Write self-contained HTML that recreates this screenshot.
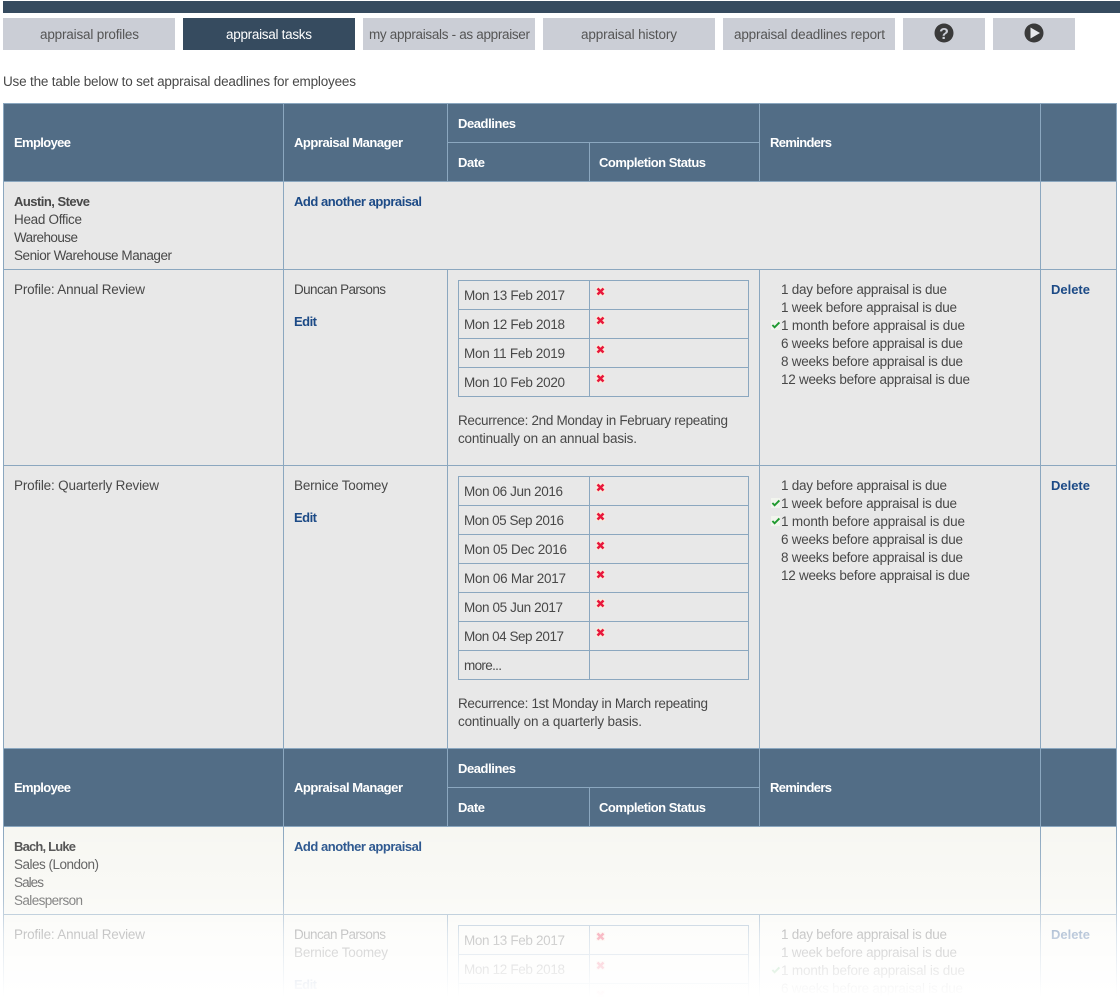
<!DOCTYPE html>
<html><head><meta charset="utf-8"><title>Appraisal tasks</title>
<style>
html,body{margin:0;padding:0;background:#fff}
svg{display:block}
text{font-family:"Liberation Sans",sans-serif;font-size:13.5px;fill:#484848}
.t{fill:#555;font-size:13.5px}
.b{font-weight:bold;font-size:13px}
.h{font-weight:bold;font-size:13px;fill:#fff}
.l{font-weight:bold;font-size:13px;fill:#1c4a86}
</style></head>
<body>
<svg xmlns="http://www.w3.org/2000/svg" width="1120" height="997" viewBox="0 0 1120 997">
<defs>
<linearGradient id="fade" x1="0" y1="827" x2="0" y2="997" gradientUnits="userSpaceOnUse">
<stop offset="0" stop-color="#fff" stop-opacity="0"/>
<stop offset="0.21" stop-color="#fff" stop-opacity="0.15"/>
<stop offset="0.43" stop-color="#fff" stop-opacity="0.32"/>
<stop offset="0.63" stop-color="#fff" stop-opacity="0.7"/>
<stop offset="0.74" stop-color="#fff" stop-opacity="0.8"/>
<stop offset="0.84" stop-color="#fff" stop-opacity="0.88"/>
<stop offset="0.94" stop-color="#fff" stop-opacity="0.96"/>
<stop offset="1" stop-color="#fff" stop-opacity="1"/>
</linearGradient>
<g id="x"><rect x="-4.5" y="-4.5" width="9" height="9" fill="#f7e9dc"/><path d="M-3 -3L3 3M3 -3L-3 3" stroke="#e8173c" stroke-width="2.5" fill="none"/></g>
<g id="c"><rect x="-5" y="-5" width="9" height="10" fill="#f2f5ee"/><path d="M-3.6 0L-1.4 2.3L3.4 -2.6" stroke="#1f9a2f" stroke-width="1.9" fill="none"/></g>
</defs>

<!-- top bar -->
<rect x="3" y="1" width="1117" height="12" fill="#364b5f"/>

<!-- tabs -->
<rect x="3" y="18" width="172" height="32" fill="#cbced6"/>
<rect x="183" y="18" width="172" height="32" fill="#364b5f"/>
<rect x="363" y="18" width="172" height="32" fill="#cbced6"/>
<rect x="543" y="18" width="172" height="32" fill="#cbced6"/>
<rect x="723" y="18" width="172" height="32" fill="#cbced6"/>
<rect x="903" y="18" width="82" height="32" fill="#cbced6"/>
<rect x="993" y="18" width="82" height="32" fill="#cbced6"/>
<text class="t" x="40" y="39" textLength="99">appraisal profiles</text>
<text class="t" x="226" y="39" textLength="86" style="fill:#fff">appraisal tasks</text>
<text class="t" x="369" y="39" textLength="161">my appraisals - as appraiser</text>
<text class="t" x="581" y="39" textLength="96">appraisal history</text>
<text class="t" x="734" y="39" textLength="151">appraisal deadlines report</text>
<circle cx="944" cy="33" r="9.5" fill="#3a3a3a"/>
<text x="944" y="39" text-anchor="middle" style="font-size:16px;font-weight:bold;fill:#cbced6">?</text>
<circle cx="1034" cy="33" r="9.5" fill="#3a3a3a"/>
<path d="M1030.5 27.5L1040 33L1030.5 38.5Z" fill="#e8e9ec"/>

<text x="3" y="86" textLength="353">Use the table below to set appraisal deadlines for employees</text>

<!-- backgrounds -->
<rect x="3" y="103" width="1114" height="79" fill="#526d86"/>
<rect x="3" y="182" width="1114" height="567" fill="#e8e8e8"/>
<rect x="3" y="749" width="1114" height="78" fill="#526d86"/>
<rect x="3" y="827" width="1114" height="170" fill="#f7f7f2"/>

<!-- grid lines -->
<g fill="#8ba7bf">
<rect x="3" y="103" width="1114" height="1"/>
<rect x="3" y="181" width="1114" height="1"/>
<rect x="3" y="269" width="1114" height="1"/>
<rect x="3" y="465" width="1114" height="1"/>
<rect x="3" y="748" width="1114" height="1"/>
<rect x="3" y="826" width="1114" height="1"/>
<rect x="3" y="914" width="1114" height="1"/>
<rect x="447" y="142" width="312" height="1"/>
<rect x="447" y="787" width="312" height="1"/>
<rect x="3" y="103" width="1" height="894"/>
<rect x="283" y="103" width="1" height="894"/>
<rect x="1040" y="103" width="1" height="894"/>
<rect x="1116" y="103" width="1" height="894"/>
<rect x="447" y="103" width="1" height="79"/>
<rect x="759" y="103" width="1" height="79"/>
<rect x="589" y="142" width="1" height="40"/>
<rect x="447" y="269" width="1" height="480"/>
<rect x="759" y="269" width="1" height="480"/>
<rect x="447" y="748" width="1" height="79"/>
<rect x="759" y="748" width="1" height="79"/>
<rect x="589" y="787" width="1" height="40"/>
<rect x="447" y="914" width="1" height="83"/>
<rect x="759" y="914" width="1" height="83"/>
<!-- inner table 1 -->
<rect x="458" y="280" width="291" height="1"/>
<rect x="458" y="309" width="291" height="1"/>
<rect x="458" y="338" width="291" height="1"/>
<rect x="458" y="367" width="291" height="1"/>
<rect x="458" y="396" width="291" height="1"/>
<rect x="458" y="280" width="1" height="117"/>
<rect x="589" y="280" width="1" height="117"/>
<rect x="748" y="280" width="1" height="117"/>
<!-- inner table 2 -->
<rect x="458" y="476" width="291" height="1"/>
<rect x="458" y="505" width="291" height="1"/>
<rect x="458" y="534" width="291" height="1"/>
<rect x="458" y="563" width="291" height="1"/>
<rect x="458" y="592" width="291" height="1"/>
<rect x="458" y="621" width="291" height="1"/>
<rect x="458" y="650" width="291" height="1"/>
<rect x="458" y="679" width="291" height="1"/>
<rect x="458" y="476" width="1" height="204"/>
<rect x="589" y="476" width="1" height="204"/>
<rect x="748" y="476" width="1" height="204"/>
<!-- inner table 3 -->
<rect x="458" y="925" width="291" height="1"/>
<rect x="458" y="954" width="291" height="1"/>
<rect x="458" y="983" width="291" height="1"/>
<rect x="458" y="925" width="1" height="72"/>
<rect x="589" y="925" width="1" height="72"/>
<rect x="748" y="925" width="1" height="72"/>
</g>

<!-- header 1 -->
<text class="h" x="14" y="147" textLength="57">Employee</text>
<text class="h" x="294" y="147" textLength="109">Appraisal Manager</text>
<text class="h" x="458" y="128" textLength="58">Deadlines</text>
<text class="h" x="458" y="167" textLength="27">Date</text>
<text class="h" x="599" y="167" textLength="107">Completion Status</text>
<text class="h" x="770" y="147" textLength="62">Reminders</text>

<!-- Austin -->
<text class="b" x="14" y="206" textLength="76">Austin, Steve</text>
<text x="14" y="224" textLength="68">Head Office</text>
<text x="14" y="242" textLength="64">Warehouse</text>
<text x="14" y="260" textLength="158">Senior Warehouse Manager</text>
<text class="l" x="294" y="206" textLength="128">Add another appraisal</text>

<!-- Annual review -->
<text x="14" y="294" textLength="131">Profile: Annual Review</text>
<text x="294" y="294" textLength="92">Duncan Parsons</text>
<text class="l" x="294" y="326" textLength="23">Edit</text>
<text x="464" y="300" textLength="101">Mon 13 Feb 2017</text>
<text x="464" y="329" textLength="101">Mon 12 Feb 2018</text>
<text x="464" y="358" textLength="101">Mon 11 Feb 2019</text>
<text x="464" y="387" textLength="101">Mon 10 Feb 2020</text>
<use href="#x" x="600.5" y="291.5"/>
<use href="#x" x="600.5" y="320.5"/>
<use href="#x" x="600.5" y="349.5"/>
<use href="#x" x="600.5" y="378.5"/>
<text x="458" y="425" textLength="270">Recurrence: 2nd Monday in February repeating</text>
<text x="458" y="443" textLength="179">continually on an annual basis.</text>
<text x="781" y="294" textLength="166">1 day before appraisal is due</text>
<text x="781" y="312" textLength="176">1 week before appraisal is due</text>
<text x="781" y="330" textLength="184">1 month before appraisal is due</text>
<text x="781" y="348" textLength="182">6 weeks before appraisal is due</text>
<text x="781" y="366" textLength="182">8 weeks before appraisal is due</text>
<text x="781" y="384" textLength="189">12 weeks before appraisal is due</text>
<use href="#c" x="776" y="325"/>
<text class="l" x="1051" y="294" textLength="39">Delete</text>

<!-- Quarterly -->
<text x="14" y="490" textLength="145">Profile: Quarterly Review</text>
<text x="294" y="490" textLength="94">Bernice Toomey</text>
<text class="l" x="294" y="522" textLength="23">Edit</text>
<text x="464" y="496" textLength="99">Mon 06 Jun 2016</text>
<text x="464" y="525" textLength="100">Mon 05 Sep 2016</text>
<text x="464" y="554" textLength="103">Mon 05 Dec 2016</text>
<text x="464" y="583" textLength="102">Mon 06 Mar 2017</text>
<text x="464" y="612" textLength="99">Mon 05 Jun 2017</text>
<text x="464" y="641" textLength="100">Mon 04 Sep 2017</text>
<text x="464" y="670" textLength="38">more...</text>
<use href="#x" x="600.5" y="487.5"/>
<use href="#x" x="600.5" y="516.5"/>
<use href="#x" x="600.5" y="545.5"/>
<use href="#x" x="600.5" y="574.5"/>
<use href="#x" x="600.5" y="603.5"/>
<use href="#x" x="600.5" y="632.5"/>
<text x="458" y="708" textLength="250">Recurrence: 1st Monday in March repeating</text>
<text x="458" y="726" textLength="184">continually on a quarterly basis.</text>
<text x="781" y="490" textLength="166">1 day before appraisal is due</text>
<text x="781" y="508" textLength="176">1 week before appraisal is due</text>
<text x="781" y="526" textLength="184">1 month before appraisal is due</text>
<text x="781" y="544" textLength="182">6 weeks before appraisal is due</text>
<text x="781" y="562" textLength="182">8 weeks before appraisal is due</text>
<text x="781" y="580" textLength="189">12 weeks before appraisal is due</text>
<use href="#c" x="776" y="503"/>
<use href="#c" x="776" y="521"/>
<text class="l" x="1051" y="490" textLength="39">Delete</text>

<!-- header 2 -->
<text class="h" x="14" y="792" textLength="57">Employee</text>
<text class="h" x="294" y="792" textLength="109">Appraisal Manager</text>
<text class="h" x="458" y="773" textLength="58">Deadlines</text>
<text class="h" x="458" y="812" textLength="27">Date</text>
<text class="h" x="599" y="812" textLength="107">Completion Status</text>
<text class="h" x="770" y="792" textLength="62">Reminders</text>

<!-- Bach -->
<text class="b" x="14" y="851" textLength="62">Bach, Luke</text>
<text x="14" y="869" textLength="85">Sales (London)</text>
<text x="14" y="887" textLength="30">Sales</text>
<text x="14" y="905" textLength="69">Salesperson</text>
<text class="l" x="294" y="851" textLength="128">Add another appraisal</text>

<text x="14" y="939" textLength="131">Profile: Annual Review</text>
<text x="294" y="939" textLength="92">Duncan Parsons</text>
<text x="294" y="957" textLength="94">Bernice Toomey</text>
<text class="l" x="294" y="989" textLength="23">Edit</text>
<text x="464" y="945" textLength="101">Mon 13 Feb 2017</text>
<text x="464" y="974" textLength="101">Mon 12 Feb 2018</text>
<use href="#x" x="600.5" y="936.5"/>
<use href="#x" x="600.5" y="965.5"/>
<use href="#x" x="600.5" y="994.5"/>
<text x="781" y="939" textLength="166">1 day before appraisal is due</text>
<text x="781" y="957" textLength="176">1 week before appraisal is due</text>
<text x="781" y="975" textLength="184">1 month before appraisal is due</text>
<text x="781" y="993" textLength="182">6 weeks before appraisal is due</text>
<use href="#c" x="776" y="970"/>
<text class="l" x="1051" y="939" textLength="39">Delete</text>

<!-- fade -->
<rect x="0" y="827" width="1120" height="170" fill="url(#fade)"/>
</svg>
</body></html>
